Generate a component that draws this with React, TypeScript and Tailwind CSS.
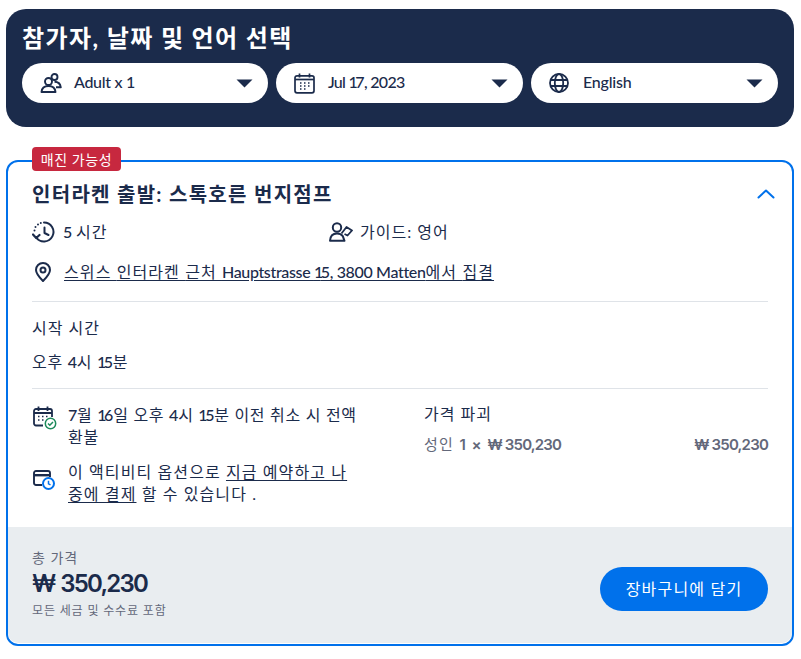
import React from "react";

const navy = "#1b2b4b";

/* Reference's Latin face is narrow with a stem-like "1"; its Hangul face runs wider than Noto. */
function T({
  children,
  hangul = "tracking-[1px]",
  latin = "tracking-[-0.2px]",
}: {
  children: string;
  hangul?: string;
  latin?: string;
}) {
  const runs = children.match(/1|[^\x00-\x7f]+ ?|[\x20-\x30\x32-\x7e]+/g) ?? [];
  return (
    <>
      {runs.map((r, i) =>
        r === "1" ? (
          <span key={i} className="font-medium tracking-[-2.5px]">{r}</span>
        ) : /[A-Za-z0-9]/.test(r) ? (
          <span key={i} className={`font-medium ${latin}`}>{r}</span>
        ) : (
          <span key={i} className={hangul}>{r}</span>
        )
      )}
    </>
  );
}

function Caret() {
  return (
    <svg width="17" height="9" viewBox="0 0 17 9" className="shrink-0">
      <path d="M0.5 0.5h16L8.5 8.5z" fill={navy} />
    </svg>
  );
}

function UsersIcon() {
  return (
    <svg width="22" height="22" viewBox="0 0 22 22" fill="none" stroke={navy} strokeWidth="1.9" className="shrink-0">
      <circle cx="8.500" cy="9.500" r="3.500" />
      <circle cx="14.500" cy="5" r="3" />
      <path d="M1.500 20c.3-3.800 3-6 7-6s6.700 2.200 7 6z" strokeLinejoin="round" />
      <path d="M14.500 9.800c3.800 0 5.800 2 6.300 5.500h-4.800" strokeLinejoin="round" />
    </svg>
  );
}

function CalendarIcon() {
  return (
    <svg width="21" height="21" viewBox="0 0 21 21" fill="none" stroke={navy} strokeWidth="1.700" className="shrink-0">
      <rect x="1" y="2.800" width="19" height="17" rx="2" />
      <path d="M5.500 0.500v4M15.500 0.500v4" />
      <path d="M1 6.500h19" />
      <path d="M6 10h1.500M10 10h1.500M14 10h1.500M6 13h1.500M10 13h1.500M14 13h1.500M6 16h1.500M10 16h1.500" strokeWidth="1.500" />
    </svg>
  );
}

function GlobeIcon() {
  return (
    <svg width="20" height="20" viewBox="0 0 20 20" fill="none" stroke={navy} strokeWidth="1.800" className="shrink-0">
      <circle cx="10" cy="10" r="9" />
      <ellipse cx="10" cy="10" rx="4.200" ry="9" />
      <path d="M1.500 7h17M1.500 13h17" />
    </svg>
  );
}

function HistoryIcon() {
  return (
    <svg width="23" height="22" viewBox="0 0 23 22" fill="none" stroke={navy} strokeWidth="2" className="shrink-0">
      <path d="M12 1.500a9.500 9.500 0 1 1-7.800 15" strokeLinecap="round" />
      <path d="M12.500 6.500v5.500l4 2" strokeLinecap="round" strokeLinejoin="round" />
      <path d="M1 13.500l3.200 3.500 3.300-3" strokeLinecap="round" strokeLinejoin="round" strokeWidth="2.200" />
      <path d="M2.500 9.500v.01M3.500 6v.01M6 3.500v.01M8.800 2v.01" strokeLinecap="round" strokeWidth="2" />
    </svg>
  );
}

function GuideIcon() {
  return (
    <svg width="24" height="20" viewBox="0 0 24 20" fill="none" stroke={navy} strokeWidth="2" className="shrink-0">
      <circle cx="8" cy="5.500" r="4.200" />
      <path d="M1 18.800c.3-4.800 3-7.300 7-7.300 2.500 0 4.500.9 5.800 2.600l1.700 4.700z" strokeLinejoin="round" />
      <path d="M12.500 11.500l5-6.500 5.500 3.500-4.500 5-3-1.500" strokeLinejoin="round" strokeWidth="1.800" />
    </svg>
  );
}

function PinIcon() {
  return (
    <svg width="16" height="20" viewBox="0 0 16 20" fill="none" stroke={navy} strokeWidth="2" className="shrink-0">
      <path d="M8 19C4 15 1 11.500 1 8a7 7 0 0 1 14 0c0 3.500-3 7-7 11z" strokeLinejoin="round" />
      <circle cx="8" cy="8" r="2.500" />
    </svg>
  );
}

function CalendarCheckIcon() {
  return (
    <svg width="24" height="24" viewBox="0 0 24 24" fill="none" className="shrink-0">
      <g stroke={navy} strokeWidth="1.800">
        <path d="M10 19.500H3a2 2 0 0 1-2-2V5a2 2 0 0 1 2-2h14a2 2 0 0 1 2 2v6" />
        <path d="M5.500 0.500v4.500M14.500 0.500v4.500M1 7h18" />
        <path d="M5 10.500h1.500M9 10.500h1.500M13 10.500h1.500M5 14h1.500M9 14h1.500" strokeWidth="1.500" />
      </g>
      <circle cx="17.500" cy="17.500" r="5.200" fill="#fff" stroke="#1d8a5b" strokeWidth="1.500" />
      <path d="M15 17.500l1.800 1.800 3.200-3.300" stroke="#1d8a5b" strokeWidth="1.500" fill="none" />
    </svg>
  );
}

function WalletClockIcon() {
  return (
    <svg width="22" height="20" viewBox="0 0 22 20" fill="none" className="shrink-0">
      <g stroke={navy} strokeWidth="1.900">
        <path d="M9 15H3a2 2 0 0 1-2-2V3a2 2 0 0 1 2-2h12a2 2 0 0 1 2 2v4" />
        <path d="M1 5.200h16" strokeWidth="2.400" />
      </g>
      <circle cx="15.500" cy="13.500" r="5.500" fill="#fff" stroke="#0071eb" strokeWidth="2" />
      <path d="M15.500 10.800v3l2 1" stroke="#0071eb" strokeWidth="1.500" fill="none" />
    </svg>
  );
}

function Select({
  icon,
  label,
  width,
  latin,
}: {
  icon: React.ReactNode;
  label: string;
  width: string;
  latin?: string;
}) {
  return (
    <div className={`flex h-10 items-center rounded-[20px] bg-white pl-[18px] pr-[15px] ${width}`}>
      <span className="flex w-[34px] shrink-0 items-center">{icon}</span>
      <span className="flex-1 pb-[2px] text-[16px] text-[#1b2b4b]">
        <T latin={latin}>{label}</T>
      </span>
      <Caret />
    </div>
  );
}

export default function App() {
  return (
    <div
      className="h-[659px] w-[801px] overflow-hidden bg-white pl-[6px] pr-[7px] pt-[9px] text-[#1b2b4b]"
      style={{ fontFamily: '"Lato", "Noto Sans CJK KR", sans-serif' }}
    >
      <div className="flex h-[118px] flex-col rounded-[20px] bg-[#1b2b4b] px-4 pt-[12px]">
        <h1 className="text-[24px] font-bold leading-[34px] tracking-[1.4px] text-white">참가자, 날짜 및 언어 선택</h1>
        <div className="mt-2 flex gap-2">
          <Select icon={<UsersIcon />} label="Adult x 1" width="w-[246px]" latin="tracking-[-0.3px]" />
          <Select icon={<CalendarIcon />} label="Jul 17, 2023" width="w-[247px]" latin="tracking-[-0.7px]" />
          <Select icon={<GlobeIcon />} label="English" width="w-[247px]" />
        </div>
      </div>

      <div className="relative mt-[33px] h-[486px] rounded-xl border-2 border-[#0071eb] bg-white">
        <span className="absolute left-6 top-[-15px] flex h-6 w-[89px] items-center justify-center rounded bg-[#c7283f] text-[14px] tracking-[0.6px] text-white">
          매진 가능성
        </span>

        <div className="h-[365px] overflow-hidden px-6">
          <div className="mt-[12px] flex h-[36px] items-center justify-between pt-[3px]">
            <h2 className="text-[20px] font-bold leading-[28px] tracking-[1.3px]">인터라켄 출발: 스톡호른 번지점프</h2>
            <svg width="18" height="10" viewBox="0 0 18 10" fill="none" stroke="#0071eb" strokeWidth="2" className="mr-[-7px]">
              <path d="M1.500 8.500L9 1.500l7.500 7" strokeLinecap="round" strokeLinejoin="round" />
            </svg>
          </div>

          <div className="mt-[9px] flex h-[26px] items-center text-[16px]">
            <div className="flex w-[297px] items-center gap-2">
              <HistoryIcon />
              <span>
                <T>5 시간</T>
              </span>
            </div>
            <div className="flex items-center gap-[7px]">
              <GuideIcon />
              <span className="tracking-[1px]">가이드: 영어</span>
            </div>
          </div>

          <div className="mt-[14px] flex h-[26px] items-center gap-[13px] pl-[3px] text-[16px]">
            <PinIcon />
            <span className="underline underline-offset-2">
              <T hangul="tracking-[1.1px]" latin="tracking-[-0.35px]">스위스 인터라켄 근처 Hauptstrasse 15, 3800 Matten에서 집결</T>
            </span>
          </div>

          <div className="mt-[16px] border-t border-[#dfe3e8]" />

          <div className="mt-[14px] text-[16px] leading-6 tracking-[1px]">시작 시간</div>
          <div className="mt-[10px] text-[16px] leading-6">
            <T hangul="tracking-[0.7px]">오후 4시 15분</T>
          </div>

          <div className="mt-[14px] border-t border-[#dfe3e8]" />

          <div className="mt-[14px] flex">
            <div className="w-[392px] pl-[1px] pt-[1px]">
              <div className="flex items-start gap-[11px] text-[16px] leading-[22px]">
                <span className="w-[24px] shrink-0 pt-[2px]">
                  <CalendarCheckIcon />
                </span>
                <span className="w-[292px] break-all">
                  <T hangul="tracking-[0.7px]">7월 16일 오후 4시 15분 이전 취소 시 전액 환불</T>
                </span>
              </div>
              <div className="mt-[13px] flex items-start gap-[13px] text-[16px] leading-[22px]">
                <span className="w-[22px] shrink-0 pt-[9px]">
                  <WalletClockIcon />
                </span>
                <span className="w-[290px] break-all tracking-[1.1px]">
                  이 액티비티 옵션으로 <span className="underline underline-offset-2">지금 예약하고 나중에 결제</span> 할 수 있습니다 .
                </span>
              </div>
            </div>
            <div className="flex-1">
              <div className="text-[16px] leading-[22px] tracking-[1px]">가격 파괴</div>
              <div
                className="mt-[8px] flex justify-between text-[15px] font-semibold leading-6 tracking-[-0.8px] text-[#63687a]"
                style={{ fontFamily: '"Inter", "Noto Sans CJK KR", sans-serif' }}
              >
                <span>
                  <span className="font-normal tracking-[1.2px]">성인 </span>
                  <span className="tracking-[1px]">1 × </span>₩ 350,230
                </span>
                <span>₩ 350,230</span>
              </div>
            </div>
          </div>
        </div>

        <div className="flex h-[116px] items-center justify-between rounded-b-[10px] bg-[#e9edf0] px-6">
          <div className="pb-[2px]">
            <div className="text-[14px] leading-[20px] tracking-[1px] text-[#63687a]">총 가격</div>
            <div
              className="mt-[1px] text-[24px] font-semibold leading-[30px] tracking-[-1px]"
              style={{ fontFamily: '"Inter", "Noto Sans CJK KR", sans-serif' }}
            >
              ₩ <span className="tracking-[-1.8px]">350,230</span>
            </div>
            <div className="mt-[2px] text-[12px] leading-[20px] tracking-[0.85px] text-[#63687a]">모든 세금 및 수수료 포함</div>
          </div>
          <div className="mt-2 flex h-11 w-[168px] items-center justify-center rounded-full bg-[#0071eb] text-[16px] tracking-[1.2px] text-white">
            장바구니에 담기
          </div>
        </div>
      </div>
    </div>
  );
}
